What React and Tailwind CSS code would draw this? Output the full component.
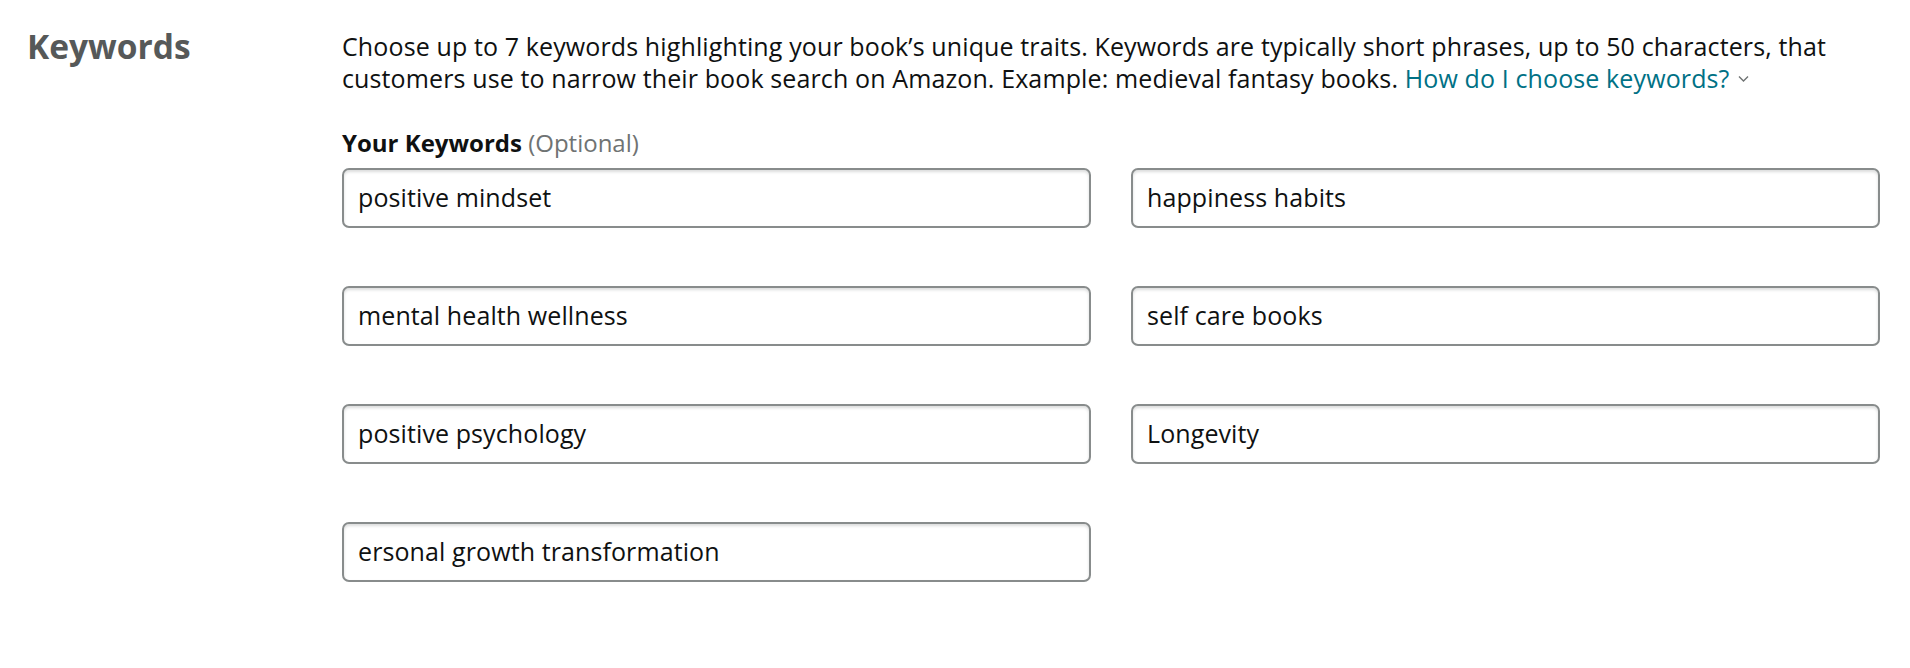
import React from "react";

const keywords = [
  ["positive mindset", "happiness habits"],
  ["mental health wellness", "self care books"],
  ["positive psychology", "Longevity"],
  ["ersonal growth transformation", null],
];

function KeywordInput({ value }) {
  return (
    <div className="h-[60px] w-full rounded-[7px] border-2 border-[#888c8c] bg-white px-[14px] shadow-[inset_0_2px_3px_rgba(15,17,17,0.15)] flex items-center">
      <span className="text-[25px] tracking-[0.1px] leading-none text-[#0f1111]">{value}</span>
    </div>
  );
}

export default function App() {
  return (
    <div
      className="w-[1910px] h-[668px] bg-white flex pl-[27px] pt-[24px]"
      style={{ fontFamily: "'Open Sans', 'Noto Sans', sans-serif" }}
    >
      <div className="w-[315px] shrink-0">
        <h2 className="text-[33.5px] font-bold leading-[44px] text-[#565959]">Keywords</h2>
      </div>
      <div className="w-[1538px] shrink-0 pt-[7px]">
        <p className="text-[25px] tracking-[0.12px] leading-[31.5px] text-[#0f1111]">
          Choose up to 7 keywords highlighting your book’s unique traits. Keywords are typically short phrases, up to 50 characters, that customers use to narrow their book search on Amazon. Example: medieval fantasy books.{" "}
          <span className="text-[#007185]">How do I choose keywords?</span>
          <svg className="inline-block ml-[8px] mb-[4px]" width="11" height="8" viewBox="0 0 11 8" fill="none">
            <path d="M1 1.5 L5.5 6 L10 1.5" stroke="#6f7373" strokeWidth="1.4" />
          </svg>
        </p>
        <div className="mt-[33px] text-[24px] leading-[31.5px]">
          <span className="font-bold text-[#0f1111]">Your Keywords</span>{" "}
          <span className="text-[#6f7373]">(Optional)</span>
        </div>
        <div className="mt-[9px] grid grid-cols-2 gap-x-[40px] gap-y-[58px]">
          {keywords.map((row, i) => (
            <React.Fragment key={i}>
              <KeywordInput value={row[0]} />
              {row[1] ? <KeywordInput value={row[1]} /> : <div />}
            </React.Fragment>
          ))}
        </div>
      </div>
    </div>
  );
}
